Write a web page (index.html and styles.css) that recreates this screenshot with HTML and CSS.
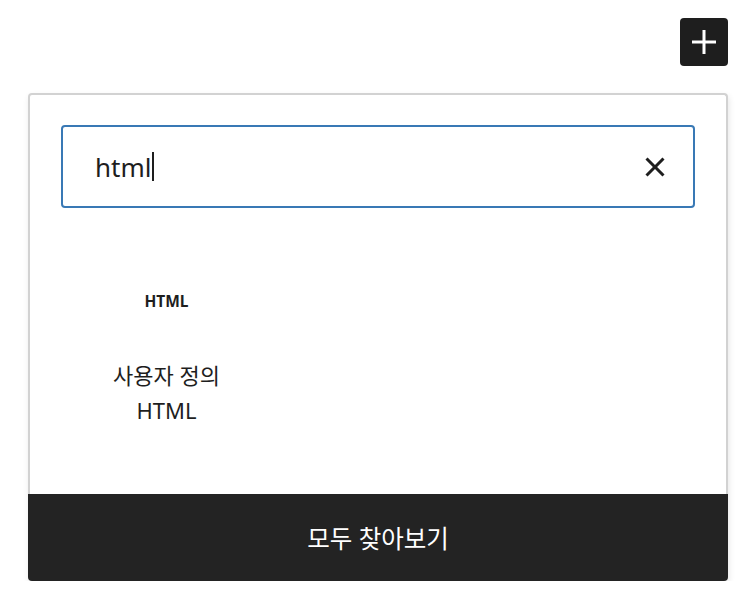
FILE: index.html
```html
<!DOCTYPE html>
<html lang="ko">
<head>
<meta charset="utf-8">
<title>Quick inserter</title>
<link rel="stylesheet" href="styles.css">
</head>
<body>
<div class="page">
  <div class="toolbar">
    <button class="add-btn" aria-label="블록 추가">
      <svg viewBox="0 0 24 24" width="48" height="48" aria-hidden="true"><path d="M18 11.25h-5.25V6h-1.5v5.25H6v1.5h5.25V18h1.5v-5.25H18v-1.5z" fill="currentColor"/></svg>
    </button>
  </div>
  <div class="panel">
    <div class="panel-body">
      <div class="search">
        <div class="search-field" role="searchbox"><span class="search-text">html</span><span class="caret"></span></div>
        <button class="clear-btn" aria-label="검색 초기화">
          <svg viewBox="0 0 24 24" width="48" height="48" aria-hidden="true"><path d="M12 13.06l3.712 3.713 1.061-1.06L13.061 12l3.712-3.712-1.06-1.06L12 10.938 8.288 7.227l-1.061 1.06L10.939 12l-3.712 3.712 1.06 1.061L12 13.061z" fill="currentColor"/></svg>
        </button>
      </div>
      <div class="block-list">
        <div class="block-item">
          <div class="block-icon"><span class="html-icon">HTML</span></div>
          <div class="block-label">사용자 정의 HTML</div>
        </div>
      </div>
    </div>
    <button class="browse-all">모두 찾아보기</button>
  </div>
</div>
</body>
</html>
```
FILE: styles.css
```css
* { box-sizing: border-box; }
html, body { margin: 0; padding: 0; background: #fff; }
body {
  font-family: "Noto Sans", "Noto Sans CJK KR", sans-serif;
  color: #1e1e1e;
}
.page { padding-top: 18px; }
.toolbar {
  display: flex;
  justify-content: flex-end;
  padding-right: 26px;
}
.add-btn {
  width: 48px;
  height: 48px;
  padding: 0;
  border: 0;
  border-radius: 4px;
  background: #1e1e1e;
  color: #fff;
  display: flex;
  align-items: center;
  justify-content: center;
}
.add-btn svg { width: 48px; height: 48px; }
.panel {
  margin: 27px 0 0 28px;
  width: 700px;
  height: 488px;
  border-radius: 4px;
  background: #fff;
  box-shadow: 1px 3px 6px rgba(0,0,0,0.10);
  display: flex;
  flex-direction: column;
}
.panel-body {
  flex: 1;
  border: 2px solid #d2d2d2;
  border-bottom: 0;
  border-radius: 4px 4px 0 0;
  padding: 30px 31px 0 31px;
}
.search {
  height: 83px;
  border: 2px solid #3979b5;
  border-radius: 4px;
  display: flex;
  align-items: center;
  padding-left: 32px;
  padding-right: 14px;
}
.search-field {
  flex: 1;
  display: flex;
  align-items: center;
  font-size: 26px;
  color: #1e1e1e;
}
.caret {
  display: inline-block;
  width: 2px;
  height: 29px;
  background: #1e1e1e;
  margin-left: 1px;
}
.clear-btn {
  width: 48px;
  height: 48px;
  padding: 0;
  border: 0;
  background: transparent;
  color: #1e1e1e;
  display: flex;
  align-items: center;
  justify-content: center;
}
.block-list {
  display: flex;
  padding-top: 69px;
}
.block-item {
  width: 211px;
  display: flex;
  flex-direction: column;
  align-items: center;
}
.block-icon {
  height: 48px;
  display: flex;
  align-items: center;
  justify-content: center;
}
.html-icon {
  font-weight: 700;
  font-size: 15.5px;
  color: #1e1e1e;
}
.block-label {
  margin-top: 33px;
  width: 160px;
  text-align: center;
  font-size: 22px;
  line-height: 35px;
  color: #1e1e1e;
}
.browse-all {
  flex: none;
  height: 87px;
  border: 0;
  margin: 0;
  border-radius: 0 0 4px 4px;
  background: #232323;
  color: #fff;
  font-family: "Noto Sans", "Noto Sans CJK KR", sans-serif;
  font-size: 24.5px;
  display: flex;
  align-items: center;
  justify-content: center;
  width: 100%;
}
```
